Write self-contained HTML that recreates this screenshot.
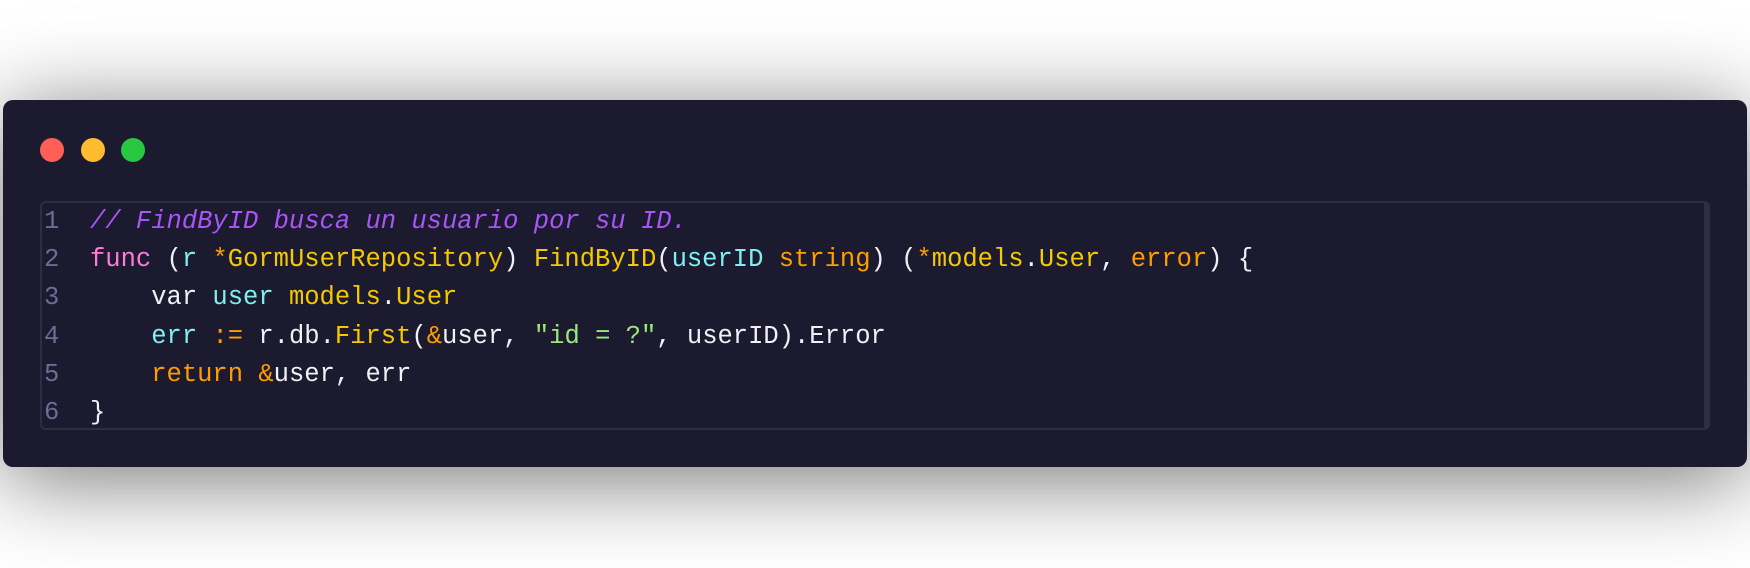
<!DOCTYPE html>
<html><head><meta charset="utf-8"><style>
html,body{margin:0;padding:0;width:1750px;height:568px;background:#fff;overflow:hidden}
.card{position:absolute;left:3px;top:100px;width:1744px;height:367px;background:#1b1a2f;border-radius:10px;box-shadow:0 12px 90px rgba(0,0,0,0.55)}
.dot{position:absolute;top:38px;width:24px;height:24px;border-radius:50%}
.box{position:absolute;left:37px;top:101px;width:1662px;height:225px;border:2px solid #2e2d44;border-right:6px solid #2e2d44;border-radius:6px}
pre{margin:0;position:absolute;left:2px;top:0;font-family:"Liberation Mono",monospace;font-size:25.5px;line-height:38.2px;color:#f0f0f5}
.n{color:#6e6c94;display:inline-block;width:46px}
.c{color:#a855f7;font-style:italic}
.k{color:#ff7ad9}
.y{color:#f5c800}
.t{color:#7ff0f0}
.o{color:#ff9d00}
.g{color:#9be87a}
</style></head><body>
<div class="card">
<div class="dot" style="left:37px;background:#ff5f57"></div>
<div class="dot" style="left:78px;background:#febc2e"></div>
<div class="dot" style="left:118px;background:#28c840"></div>
<div class="box"><pre><span class="n">1</span><span class="c">// FindByID busca un usuario por su ID.</span>
<span class="n">2</span><span class="k">func</span> (<span class="t">r</span> <span class="o">*</span><span class="y">GormUserRepository</span>) <span class="y">FindByID</span>(<span class="t">userID</span> <span class="o">string</span>) (<span class="o">*</span><span class="y">models</span>.<span class="y">User</span>, <span class="o">error</span>) {
<span class="n">3</span>    var <span class="t">user</span> <span class="y">models</span>.<span class="y">User</span>
<span class="n">4</span>    <span class="t">err</span> <span class="o">:=</span> r.db.<span class="y">First</span>(<span class="o">&amp;</span>user, <span class="g">"id = ?"</span>, userID).Error
<span class="n">5</span>    <span class="o">return</span> <span class="o">&amp;</span>user, err
<span class="n">6</span>}</pre></div>
</div>
</body></html>
